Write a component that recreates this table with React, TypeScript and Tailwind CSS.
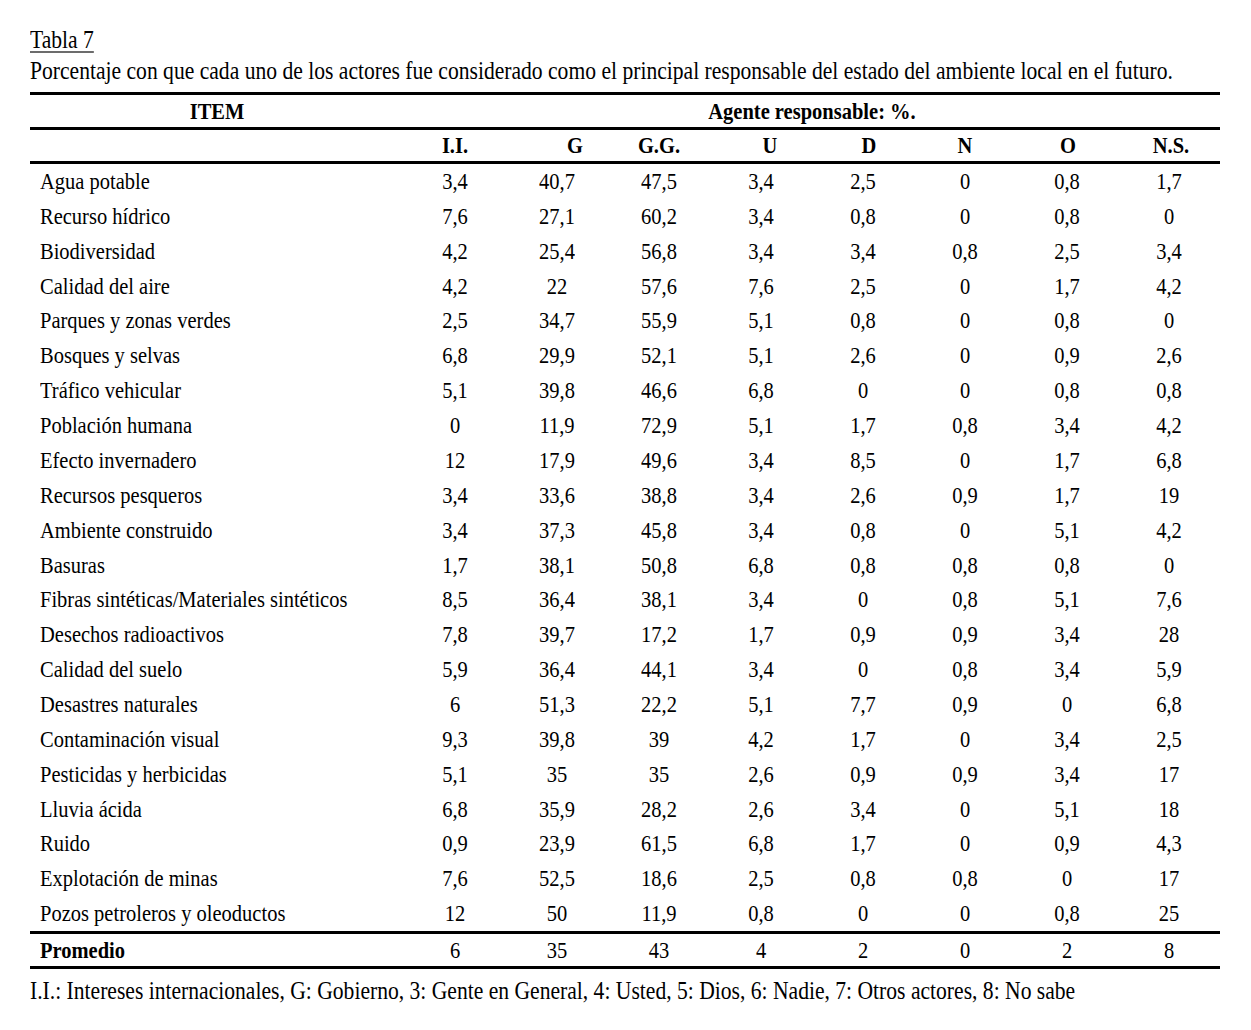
import React from "react";

const cols = [
  { label: "I.I.", cls: "" },
  { label: "G", cls: "pl-[36px]" },
  { label: "G.G.", cls: "" },
  { label: "U", cls: "pl-[18px]" },
  { label: "D", cls: "pl-[12px]" },
  { label: "N", cls: "" },
  { label: "O", cls: "pl-[2px]" },
  { label: "N.S.", cls: "pl-[4px]" },
];

const rows: string[][] = [
  ["Agua potable", "3,4", "40,7", "47,5", "3,4", "2,5", "0", "0,8", "1,7"],
  ["Recurso hídrico", "7,6", "27,1", "60,2", "3,4", "0,8", "0", "0,8", "0"],
  ["Biodiversidad", "4,2", "25,4", "56,8", "3,4", "3,4", "0,8", "2,5", "3,4"],
  ["Calidad del aire", "4,2", "22", "57,6", "7,6", "2,5", "0", "1,7", "4,2"],
  ["Parques y zonas verdes", "2,5", "34,7", "55,9", "5,1", "0,8", "0", "0,8", "0"],
  ["Bosques y selvas", "6,8", "29,9", "52,1", "5,1", "2,6", "0", "0,9", "2,6"],
  ["Tráfico vehicular", "5,1", "39,8", "46,6", "6,8", "0", "0", "0,8", "0,8"],
  ["Población humana", "0", "11,9", "72,9", "5,1", "1,7", "0,8", "3,4", "4,2"],
  ["Efecto invernadero", "12", "17,9", "49,6", "3,4", "8,5", "0", "1,7", "6,8"],
  ["Recursos pesqueros", "3,4", "33,6", "38,8", "3,4", "2,6", "0,9", "1,7", "19"],
  ["Ambiente construido", "3,4", "37,3", "45,8", "3,4", "0,8", "0", "5,1", "4,2"],
  ["Basuras", "1,7", "38,1", "50,8", "6,8", "0,8", "0,8", "0,8", "0"],
  ["Fibras sintéticas/Materiales sintéticos", "8,5", "36,4", "38,1", "3,4", "0", "0,8", "5,1", "7,6"],
  ["Desechos radioactivos", "7,8", "39,7", "17,2", "1,7", "0,9", "0,9", "3,4", "28"],
  ["Calidad del suelo", "5,9", "36,4", "44,1", "3,4", "0", "0,8", "3,4", "5,9"],
  ["Desastres naturales", "6", "51,3", "22,2", "5,1", "7,7", "0,9", "0", "6,8"],
  ["Contaminación visual", "9,3", "39,8", "39", "4,2", "1,7", "0", "3,4", "2,5"],
  ["Pesticidas y herbicidas", "5,1", "35", "35", "2,6", "0,9", "0,9", "3,4", "17"],
  ["Lluvia ácida", "6,8", "35,9", "28,2", "2,6", "3,4", "0", "5,1", "18"],
  ["Ruido", "0,9", "23,9", "61,5", "6,8", "1,7", "0", "0,9", "4,3"],
  ["Explotación de minas", "7,6", "52,5", "18,6", "2,5", "0,8", "0,8", "0", "17"],
  ["Pozos petroleros y oleoductos", "12", "50", "11,9", "0,8", "0", "0", "0,8", "25"],
];

const promedio = ["6", "35", "43", "4", "2", "0", "2", "8"];

// text in the scan is a little taller than plain Times
const T: React.FC<{ children: React.ReactNode; className?: string }> = ({
  children,
  className = "",
}) => <span className={`inline-block scale-y-[1.15] ${className}`}>{children}</span>;

const grid = "grid grid-cols-[374px_repeat(8,102px)] items-center";

export default function App() {
  return (
    <div className="min-h-[1030px] bg-white text-black font-['Liberation_Serif',serif] text-[20.5px]">
      <div className="ml-[30px] w-[1190px] pt-[25px]">
        {/* Caption */}
        <div className="text-[21.6px] leading-[31px]">
          <div>
            <T className="underline underline-offset-[3px] decoration-1">Tabla 7</T>
          </div>
          <div>
            <T>
              Porcentaje con que cada uno de los actores fue considerado como el principal
              responsable del estado del ambiente local en el futuro.
            </T>
          </div>
        </div>

        {/* Table */}
        <div className="mt-[5px] border-t-[3px] border-black">
          <div className="flex h-[32px] items-center font-bold">
            <div className="w-[374px] text-center">
              <T>ITEM</T>
            </div>
            <div className="flex-1 text-center">
              <T>Agente responsable: %.</T>
            </div>
          </div>
          <div className={`${grid} h-[34px] border-t-[3px] border-black font-bold`}>
            <div />
            {cols.map((c) => (
              <div key={c.label} className={`text-center ${c.cls}`}>
                <T>{c.label}</T>
              </div>
            ))}
          </div>
          <div className="border-t-[3px] border-black">
            {rows.map((r) => (
              <div key={r[0]} className={`${grid} h-[34.86px]`}>
                <div className="pl-[10px]">
                  <T>{r[0]}</T>
                </div>
                {r.slice(1).map((v, i) => (
                  <div key={i} className="text-center">
                    <T>{v}</T>
                  </div>
                ))}
              </div>
            ))}
          </div>
          <div className={`${grid} h-[38px] border-t-[3px] border-b-[3px] border-black`}>
            <div className="pl-[10px] font-bold">
              <T>Promedio</T>
            </div>
            {promedio.map((v, i) => (
              <div key={i} className="text-center">
                <T>{v}</T>
              </div>
            ))}
          </div>
        </div>

        {/* Footnote */}
        <div className="mt-[7px] text-[21.6px] leading-[30px]">
          <T>
            I.I.: Intereses internacionales, G: Gobierno, 3: Gente en General, 4: Usted, 5:
            Dios, 6: Nadie, 7: Otros actores, 8: No sabe
          </T>
        </div>
      </div>
    </div>
  );
}
